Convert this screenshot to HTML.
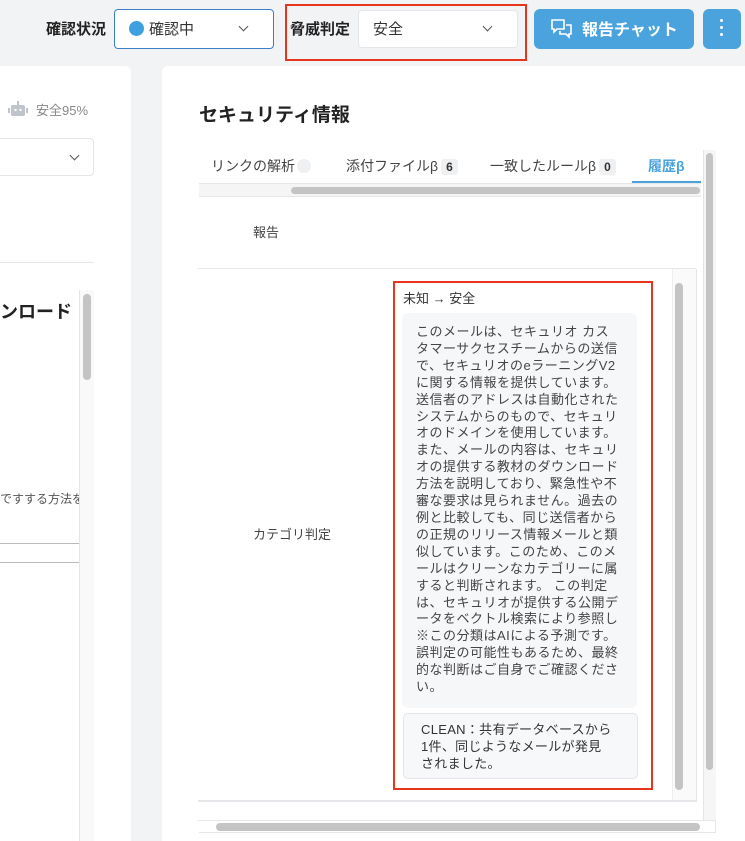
<!DOCTYPE html>
<html><head><meta charset="utf-8"><style>
*{box-sizing:border-box;margin:0;padding:0}
body{width:745px;height:841px;overflow:hidden;background:#f2f3f5;font-family:"Liberation Sans","Noto Sans CJK JP",sans-serif;color:#333;position:relative}
.a{position:absolute;white-space:nowrap}
.sel{position:absolute;background:#fff;border:1px solid #e3e5e8;border-radius:4px}
.chev{position:absolute;width:7px;height:7px;border-right:1.5px solid #555;border-bottom:1.5px solid #555;transform:rotate(45deg)}
.badge{display:inline-block;background:#eef0f2;font-size:12px;font-weight:bold;padding:1px 5px;border-radius:3px;margin-left:3px;color:#333}
</style></head><body>
<div class="a" style="left:46px;top:18px;font-size:15px;font-weight:bold;color:#222">確認状況</div>
<div class="sel" style="left:114px;top:9px;width:160px;height:40px;border-color:#3d7fc4"></div>
<div class="a" style="left:129px;top:21px;width:15px;height:15px;border-radius:50%;background:#3fa0e0"></div>
<div class="a" style="left:149px;top:18px;font-size:15px">確認中</div>
<div class="chev" style="left:240px;top:23px"></div>
<div class="a" style="left:285px;top:4px;width:242px;height:57px;border:2px solid #e8351e"></div>
<div class="a" style="left:290px;top:18px;font-size:15px;font-weight:bold;color:#222">脅威判定</div>
<div class="sel" style="left:358px;top:10px;width:160px;height:38px"></div>
<div class="a" style="left:373px;top:18px;font-size:15px">安全</div>
<div class="chev" style="left:484px;top:23px"></div>
<div class="a" style="left:534px;top:9px;width:160px;height:40px;background:#4aa3dd;border-radius:6px"></div>
<svg class="a" style="left:550px;top:18px" width="24" height="22" viewBox="0 0 24 22" fill="none" stroke="#fff" stroke-width="1.6"><path d="M2 2h12v9H7l-3 3v-3H2z"/><path d="M16 7h5v9h-2v3l-3-3h-6v-3"/></svg>
<div class="a" style="left:582px;top:16px;font-size:16px;font-weight:bold;color:#fff">報告チャット</div>
<div class="a" style="left:703px;top:9px;width:38px;height:40px;background:#4aa3dd;border-radius:6px"></div>
<div class="a" style="left:720px;top:19px;width:3px;height:3px;background:#fff;border-radius:50%;box-shadow:0 7px 0 #fff,0 14px 0 #fff"></div>
<div class="a" style="left:0;top:66px;width:131px;height:775px;background:#fff;border-radius:0 6px 0 0"></div>
<svg class="a" style="left:8px;top:101px" width="20" height="16" viewBox="0 0 20 16"><rect x="3" y="4" width="14" height="11" rx="2" fill="#bfc4cb"/><rect x="9" y="0" width="2" height="4" fill="#bfc4cb"/><rect x="0" y="7" width="2" height="5" fill="#bfc4cb"/><rect x="18" y="7" width="2" height="5" fill="#bfc4cb"/><circle cx="7.5" cy="9" r="1.2" fill="#fff"/><circle cx="12.5" cy="9" r="1.2" fill="#fff"/></svg>
<div class="a" style="left:36px;top:100px;font-size:13px;color:#888">安全95%</div>
<div class="sel" style="left:-5px;top:138px;width:99px;height:38px"></div>
<div class="chev" style="left:71px;top:152px"></div>
<div class="a" style="left:0;top:262px;width:94px;height:1px;background:#e5e7ea"></div>
<div class="a" style="left:79px;top:290px;width:15px;height:551px;background:#f9f9f9;border-left:1px solid #e5e5e5"></div>
<div class="a" style="left:83px;top:294px;width:8px;height:86px;background:#c4c4c4;border-radius:4px"></div>
<div class="a" style="left:0;top:298px;font-size:18px;font-weight:bold;color:#222">ンロード</div>
<div class="a" style="left:0;top:490px;font-size:12px;color:#555;width:79px;overflow:hidden">ですする方法をご案</div>
<div class="a" style="left:0;top:543px;width:79px;height:1px;background:#bbb"></div>
<div class="a" style="left:0;top:562px;width:79px;height:1px;background:#bbb"></div>
<div class="a" style="left:162px;top:66px;width:583px;height:775px;background:#fff;border-radius:6px 0 0 0"></div>
<div class="a" style="left:199px;top:100px;font-size:19px;font-weight:bold;color:#222">セキュリティ情報</div>
<div class="a" style="left:199px;top:150px;width:517px;height:683px;border-right:1px solid #e5e7ea;border-bottom:1px solid #e5e7ea"></div>
<div class="a" style="left:703px;top:150px;width:13px;height:670px;background:#f6f6f6;border-left:1px solid #e5e5e5"></div>
<div class="a" style="left:706px;top:153px;width:7px;height:617px;background:#c4c4c4;border-radius:4px"></div>
<div class="a" style="left:211px;top:156px;font-size:14px;color:#444">リンクの解析<span style="display:inline-block;width:14px;height:14px;border-radius:50%;background:#eef0f2;vertical-align:-2px;margin-left:2px"></span></div>
<div class="a" style="left:346px;top:156px;font-size:14px;color:#444">添付ファイルβ<span class="badge">6</span></div>
<div class="a" style="left:490px;top:156px;font-size:14px;color:#444">一致したルールβ<span class="badge">0</span></div>
<div class="a" style="left:648px;top:156px;font-size:14px;font-weight:bold;color:#4aa3dd">履歴β</div>
<div class="a" style="left:199px;top:183px;width:502px;height:1px;background:#e5e7ea"></div>
<div class="a" style="left:632px;top:181px;width:69px;height:2px;background:#4aa3dd"></div>
<div class="a" style="left:199px;top:184px;width:502px;height:13px;background:#f5f5f5;border-bottom:1px solid #e5e7ea"></div>
<div class="a" style="left:291px;top:187px;width:409px;height:7px;background:#c4c4c4;border-radius:4px"></div>
<div class="a" style="left:253px;top:222px;font-size:13px;color:#444">報告</div>
<div class="a" style="left:198px;top:268px;width:498px;height:1px;background:#e5e7ea"></div>
<div class="a" style="left:253px;top:524px;font-size:13px;color:#444">カテゴリ判定</div>
<div class="a" style="left:672px;top:269px;width:25px;height:531px;border-left:1px solid #eee;border-right:1px solid #e5e5e5;background:#fafafa"></div>
<div class="a" style="left:675px;top:283px;width:8px;height:507px;background:#c4c4c4;border-radius:4px"></div>
<div class="a" style="left:198px;top:800px;width:499px;height:2px;background:#e5e7ea"></div>
<div class="a" style="left:198px;top:820px;width:518px;height:1px;background:#e5e7ea"></div>
<div class="a" style="left:216px;top:823px;width:484px;height:8px;background:#c4c4c4;border-radius:4px"></div>
<div class="a" style="left:393px;top:281px;width:260px;height:509px;border:2px solid #e8351e;background:#fff"></div>
<div class="a" style="left:403px;top:288px;font-size:13px;color:#333">未知 → 安全</div>
<div class="a" style="left:402px;top:313px;width:235px;height:395px;background:#f6f7f9;border-radius:6px"></div>
<div class="a" style="left:416px;top:324px;width:222px;font-size:13px;line-height:16.9px;letter-spacing:0.5px;color:#444;white-space:nowrap">このメールは、セキュリオ カス<br>タマーサクセスチームからの送信<br>で、セキュリオのeラーニングV2<br>に関する情報を提供しています。<br>送信者のアドレスは自動化された<br>システムからのもので、セキュリ<br>オのドメインを使用しています。<br>また、メールの内容は、セキュリ<br>オの提供する教材のダウンロード<br>方法を説明しており、緊急性や不<br>審な要求は見られません。過去の<br>例と比較しても、同じ送信者から<br>の正規のリリース情報メールと類<br>似しています。このため、このメ<br>ールはクリーンなカテゴリーに属<br>すると判断されます。 この判定<br>は、セキュリオが提供する公開デ<br>ータをベクトル検索により参照し<br>※この分類はAIによる予測です。<br>誤判定の可能性もあるため、最終<br>的な判断はご自身でご確認くださ<br>い。</div>
<div class="a" style="left:403px;top:713px;width:235px;height:66px;background:#f7f8fa;border:1px solid #e3e5e8;border-radius:5px"></div>
<div class="a" style="left:421px;top:721px;font-size:13px;line-height:17px;letter-spacing:0.3px;color:#333">CLEAN：共有データベースから<br>1件、同じようなメールが発見<br>されました。</div>
</body></html>
